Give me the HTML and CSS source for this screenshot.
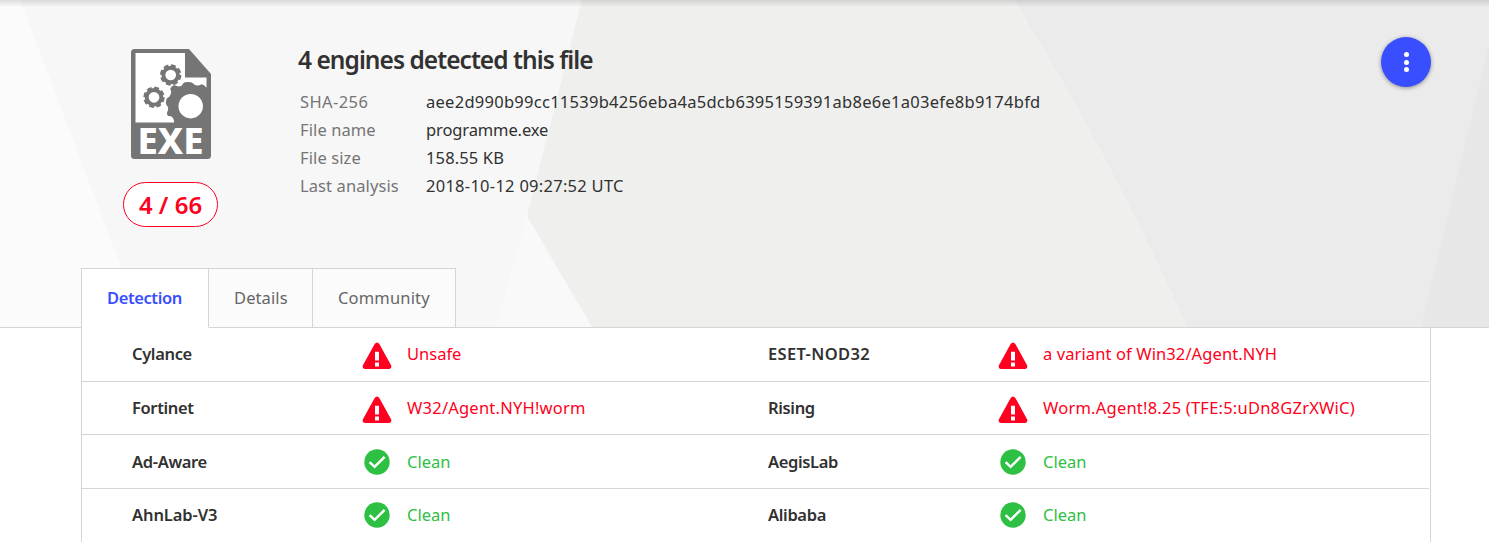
FILE: index.html
```html
<!DOCTYPE html>
<html lang="en">
<head>
<meta charset="utf-8">
<title>File report</title>
<link rel="stylesheet" href="styles.css">
</head>
<body>
<svg class="defs" width="0" height="0" aria-hidden="true">
  <symbol id="warn" viewBox="0 0 30 28">
    <path fill="#ff0020" fill-rule="evenodd" d="M12.5 2.2Q15-1 17.5 2.2L29.2 23.6Q30 26.5 27.2 27H2.8Q0 26.5.8 23.6ZM13 9.8V18.6H17V9.8ZM13 20.4V24.4H17V20.4Z"/>
  </symbol>
  <symbol id="ok" viewBox="0 0 30 28">
    <circle cx="15" cy="14" r="12.7" fill="#2dc043"/>
    <path d="M7.6 14.2L12.6 18.8L22.6 8.9" fill="none" stroke="#fff" stroke-width="2.5"/>
  </symbol>
</svg>
<header class="hero">
  <svg class="backdrop" viewBox="0 0 1489 327" preserveAspectRatio="none" aria-hidden="true">
    <path fill="#f7f7f7" d="M0 0H1489V327H0Z"/>
    <path fill="#fbfbfb" d="M0 0H20L144 327H0Z"/>
    <path fill="#f9f9f9" d="M527 216L592 327H496Z"/>
    <path fill="#efefed" d="M582 0H1014Q1110 155 1187 327H592L527 216Z"/>
    <path fill="#ebebeb" d="M1014 0H1489V327H1187Q1110 155 1014 0Z"/>
    <path fill="#e7e7e7" d="M1489 45V327H1421Z"/>
  </svg>
  <div class="summary">
    <div class="badge">
      <svg class="exe" viewBox="0 0 80 110" width="80" height="110">
        <path fill="#757575" d="M3.500 0H58L80 25V106.500Q80 110 76.500 110H3.500Q0 110 0 106.500V3.500Q0 0 3.500 0Z"/>
        <path fill="#fff" d="M4.500 4H54V28.500H75.500V38.700Q73 35.500 70.700 35.200Q66 37.800 63 35.300Q61.500 33 57.500 33Q53 33 52.300 34.300L50.700 36.700Q47 38.300 44 36.300Q42 36 40.700 37.700Q39 39 39.300 40.300Q41.500 43 38.300 47.700Q35.700 48.500 35.200 51Q34.300 54.500 35.500 56Q38.300 59 36.500 62.500Q35 65 37.300 67Q41 66.500 42.500 70L43.300 73.500H4.500Z"/>
        <g fill="none" stroke="#757575">
          <circle cx="39.700" cy="26" r="7.300" stroke-width="3.900"/>
          <circle cx="39.700" cy="26" r="9.300" stroke-width="2.800" stroke-dasharray="4.700 2.604"/>
          <circle cx="23" cy="48.300" r="7.300" stroke-width="3.900"/>
          <circle cx="23" cy="48.300" r="9.300" stroke-width="2.800" stroke-dasharray="4.700 2.604"/>
        </g>
        <circle cx="59.700" cy="57.200" r="12.200" fill="#fff"/>
        <text class="exe-label" x="6.500" y="104.500" textLength="66" lengthAdjust="spacingAndGlyphs">EXE</text>
      </svg>
      <div class="ratio"><span>4 / 66</span></div>
    </div>
    <div class="info">
      <h1 class="title">4 engines detected this file</h1>
      <dl class="meta">
        <dt class="wide">SHA-256</dt><dd class="hash">aee2d990b99cc11539b4256eba4a5dcb6395159391ab8e6e1a03efe8b9174bfd</dd>
        <dt>File name</dt><dd class="name">programme.exe</dd>
        <dt>File size</dt><dd class="size">158.55 KB</dd>
        <dt>Last analysis</dt><dd class="date">2018-10-12 09:27:52 UTC</dd>
      </dl>
    </div>
    <button class="menu" aria-label="Menu"><i></i><i></i><i></i></button>
  </div>
  <nav class="tabs">
    <a class="tab active">Detection</a>
    <a class="tab details">Details</a>
    <a class="tab community">Community</a>
  </nav>
</header>
<main class="panel">
  <div class="row">
    <b>Cylance</b><svg><use href="#warn"/></svg><span class="bad">Unsafe</span>
    <b class="caps">ESET-NOD32</b><svg><use href="#warn"/></svg><span class="bad variant">a variant of Win32/Agent.NYH</span>
  </div>
  <div class="row">
    <b>Fortinet</b><svg><use href="#warn"/></svg><span class="bad worm">W32/Agent.NYH!worm</span>
    <b>Rising</b><svg><use href="#warn"/></svg><span class="bad worm">Worm.Agent!8.25 (TFE:5:uDn8GZrXWiC)</span>
  </div>
  <div class="row">
    <b>Ad-Aware</b><svg><use href="#ok"/></svg><span class="good">Clean</span>
    <b>AegisLab</b><svg><use href="#ok"/></svg><span class="good">Clean</span>
  </div>
  <div class="row">
    <b class="mixed">AhnLab-V3</b><svg><use href="#ok"/></svg><span class="good">Clean</span>
    <b>Alibaba</b><svg><use href="#ok"/></svg><span class="good">Clean</span>
  </div>
</main>
</body>
</html>
```
FILE: styles.css
```css
* { box-sizing: border-box; }
body { margin: 0; height: 542px; overflow: hidden; background: #fff; color: #313131; font: 400 16.5px/28px "Noto Sans", "Open Sans", sans-serif; letter-spacing: 0; }
.defs { position: absolute; }
.hero { position: relative; height: 328px; border-bottom: 1px solid #d5d5d5; display: flex; flex-direction: column; }
.backdrop { position: absolute; inset: 0; width: 100%; height: 327px; }
.hero::before { content: ""; position: absolute; inset: 0 0 auto; z-index: 1; height: 7px; background: linear-gradient(rgba(0,0,0,.12), rgba(0,0,0,0)); }
.summary { position: relative; flex: none; height: 268px; display: flex; padding: 37px 58px 0 123px; }
.badge { width: 95px; display: flex; flex-direction: column; align-items: center; padding-top: 12px; }
.exe { display: block; overflow: visible; }
.exe-label { font: 800 36px "Noto Sans", sans-serif; letter-spacing: 0; fill: #fff; }
.ratio { width: 95px; height: 45px; margin-top: 23px; border: 1px solid #ff0020; border-radius: 23px; background: #fff; color: #ff0020; font-size: 24px; font-weight: 600; line-height: 44px; text-align: center; letter-spacing: 0; }
.info { flex: 1; padding-left: 80px; }
.title { margin: 6px 0 0; height: 34px; font-size: 24.5px; line-height: 34px; font-weight: 600; letter-spacing: -.96px; }
.meta { margin: 11px 0 0 2px; display: grid; grid-template-columns: 126px 1fr; grid-auto-rows: 28px; }
.meta dt { color: #757575; letter-spacing: .1px; }
.meta dt.wide { letter-spacing: .4px; }
.meta dd { margin: 0; }
.meta .hash, .meta .date { letter-spacing: .27px; }
.meta .name { letter-spacing: -.12px; }
.meta .size { letter-spacing: .13px; }
.menu { width: 50px; height: 50px; padding: 0; border: 0; border-radius: 50%; background: #394eff; box-shadow: 0 1px 4px rgba(0,0,0,.4); display: flex; flex-direction: column; align-items: center; justify-content: center; gap: 2.5px; }
.menu i { width: 5px; height: 5px; border-radius: 50%; background: #fff; }
.tabs { position: relative; flex: none; margin: 0 0 -1px 81px; display: flex; height: 60px; border-left: 1px solid #d5d5d5; align-self: flex-start; }
.tab { border: 1px solid #d5d5d5; border-left: 0; background: #fbfbfb; color: #666; line-height: 58px; padding-left: 25px; width: 104px; letter-spacing: .1px; }
.tab.active { width: 127px; background: #fff; color: #394eff; font-weight: 600; border-bottom-color: #fff; letter-spacing: -.4px; }
.tab.community { width: 143px; letter-spacing: .17px; }
.panel { margin: 0 58px 0 81px; width: 1350px; height: 214px; border: 1px solid #d5d5d5; border-width: 0 1px 0 1px; padding-right: 1px; display: grid; grid-template-rows: 54px 53px 54px 54px; }
.row { display: grid; grid-template-columns: 230px 45px 361px 230px 45px 1fr; padding-left: 50px; border-bottom: 1px solid #d5d5d5; line-height: 52px; }
.row:last-child { border-bottom: 0; }
.row:nth-child(3) { line-height: 54px; }
.row b { font-weight: 600; letter-spacing: -.35px; }
.row b.caps { letter-spacing: .35px; }
.row b.mixed { letter-spacing: -.1px; }
.row svg { width: 30px; height: 28px; margin-top: 14px; }
.row:nth-child(n+3) svg { margin-top: 13px; }
.row:last-child svg { margin-top: 12px; }
.bad { color: #ff0020; }
.bad.variant { letter-spacing: .1px; }
.bad.worm { letter-spacing: .22px; }
.good { color: #2dc043; }
```
